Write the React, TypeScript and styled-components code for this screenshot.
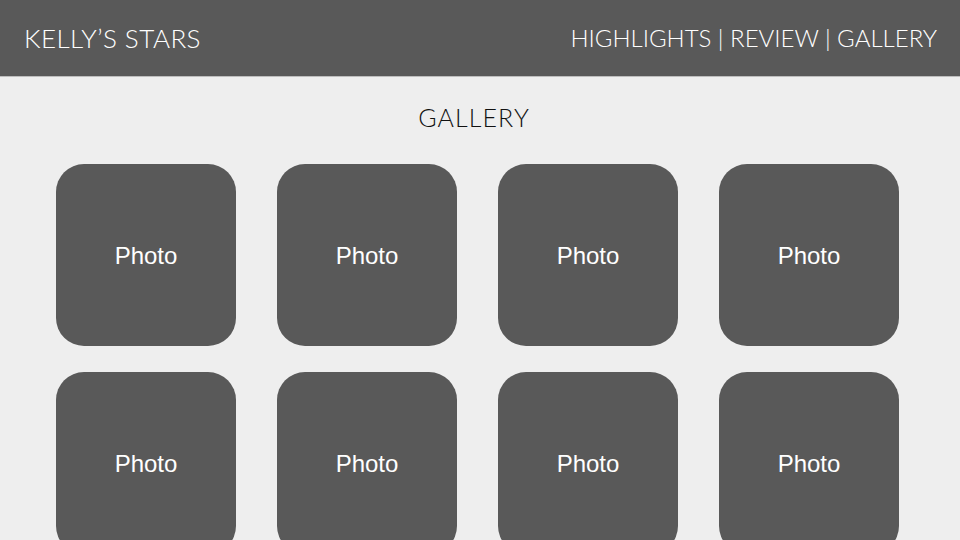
import React from "react";
import styled, { createGlobalStyle } from "styled-components";

const GlobalStyle = createGlobalStyle`
  html, body {
    margin: 0;
    padding: 0;
    background: #eeeeee;
  }
  body {
    width: 960px;
    height: 540px;
    overflow: hidden;
  }
`;

const Page = styled.div`
  width: 960px;
  height: 540px;
  background: #eeeeee;
  display: flex;
  flex-direction: column;
  overflow: hidden;
`;

const Header = styled.header`
  height: 77px;
  flex: 0 0 77px;
  background: #595959;
  display: flex;
  align-items: center;
  justify-content: space-between;
  padding: 0 23px 0 24px;
  box-sizing: border-box;
  border-bottom: 1px solid #bdbdbd;
`;

const Brand = styled.div`
  font-family: "Lato", "Noto Sans", sans-serif;
  font-weight: 300;
  font-size: 26px;
  color: #ffffff;
  letter-spacing: 0.45px;
  line-height: 1;
`;

const Nav = styled.nav`
  font-family: "Lato", "Noto Sans", sans-serif;
  font-weight: 300;
  font-size: 24px;
  color: #ffffff;
  letter-spacing: 0;
  line-height: 1;
  white-space: pre;
`;

const Main = styled.main`
  display: flex;
  flex-direction: column;
`;

const Heading = styled.h1`
  margin: 20px 12px 27px 0;
  height: 40px;
  line-height: 40px;
  text-align: center;
  font-family: "Lato", "Noto Sans", sans-serif;
  font-weight: 300;
  font-size: 25px;
  color: #111111;
  letter-spacing: 1.1px;
`;

const Grid = styled.div`
  display: grid;
  grid-template-columns: repeat(4, 180px);
  grid-auto-rows: 182px;
  column-gap: 41px;
  row-gap: 26px;
  padding-left: 56px;
`;

const PhotoCard = styled.div`
  background: #595959;
  border-radius: 28px;
  display: flex;
  align-items: center;
  justify-content: center;
  font-family: "Liberation Sans", Arial, sans-serif;
  font-size: 24px;
  color: #ffffff;
  padding-top: 1px;
  box-sizing: border-box;
`;

export default function App() {
  const photos = Array.from({ length: 8 }, (_, i) => i);
  return (
    <Page>
      <GlobalStyle />
      <Header>
        <Brand>KELLY’S STARS</Brand>
        <Nav>HIGHLIGHTS | REVIEW | GALLERY</Nav>
      </Header>
      <Main>
        <Heading>GALLERY</Heading>
        <Grid>
          {photos.map((i) => (
            <PhotoCard key={i}>Photo</PhotoCard>
          ))}
        </Grid>
      </Main>
    </Page>
  );
}
